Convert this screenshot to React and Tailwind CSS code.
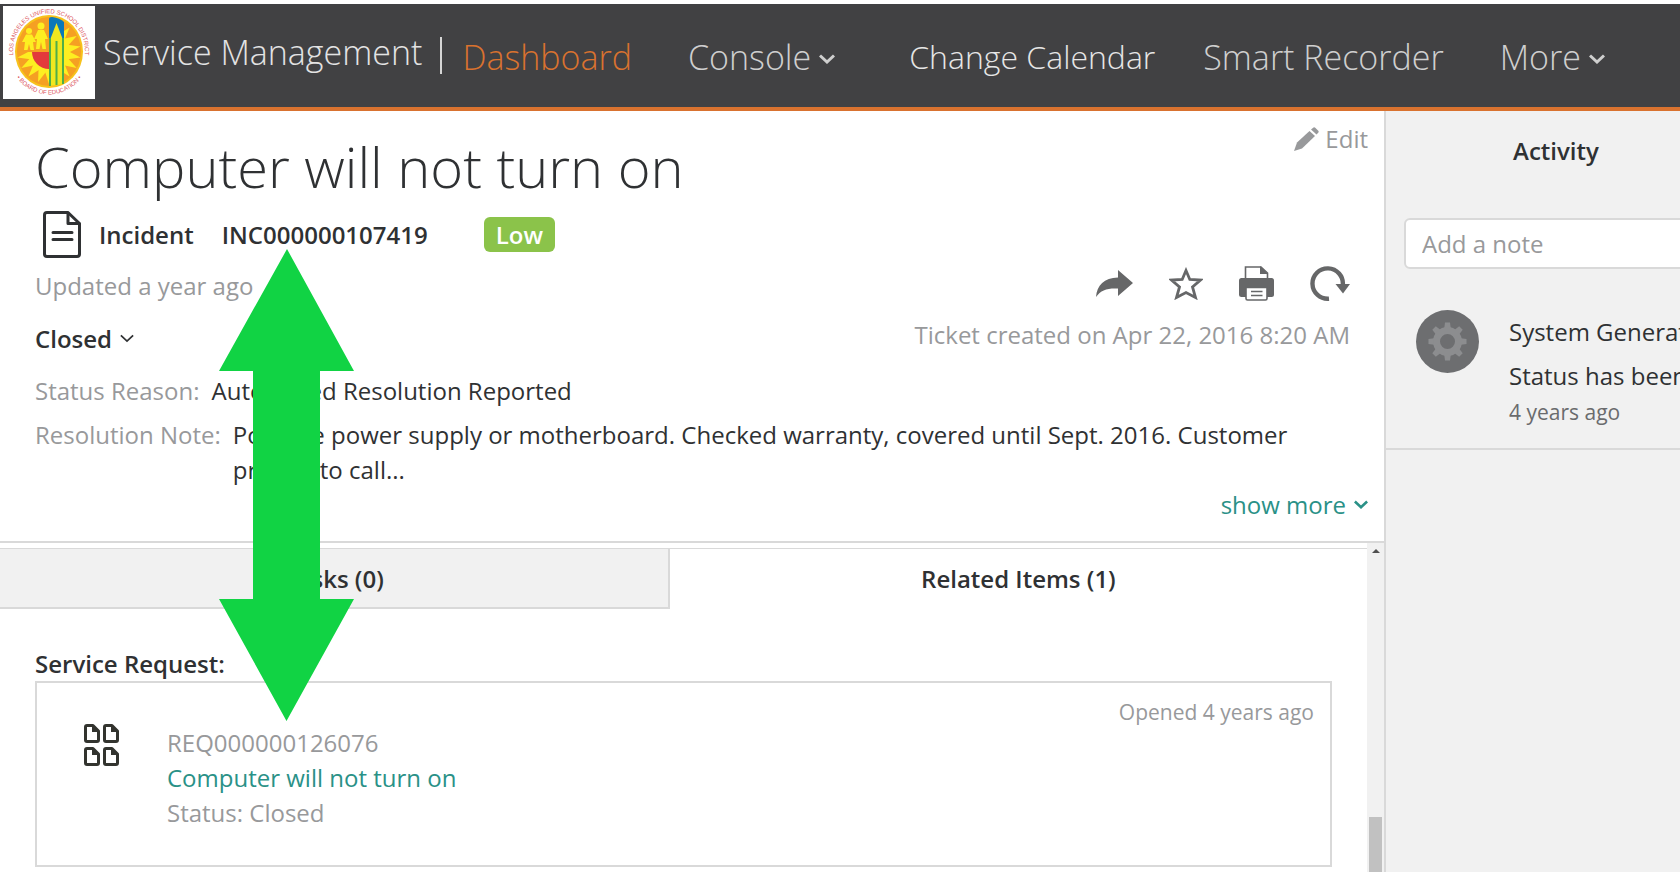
import React, { useState } from "react";

function Logo() {
  const rays = Array.from({ length: 18 }, (_, i) => i * 20);
  return (
    <svg viewBox="0 0 92 93" className="w-[92px] h-[93px] bg-white shrink-0" role="img" aria-label="Los Angeles Unified School District Board of Education">
      <defs>
        <path id="ring-top" d="M 13.4 61.3 A 36 38 0 1 1 78.6 61.3" />
        <path id="ring-bottom" d="M 9.500 64.7 A 41 43.5 0 0 0 82.500 64.7" />
      </defs>
      <ellipse cx="46" cy="45.500" rx="34" ry="36.500" fill="#f7c21c" />
      <ellipse cx="46" cy="45.500" rx="32" ry="34.500" fill="#f5a023" />
      <g fill="#fdee21">
        {rays.map((r) => (
          <path key={r} d="M41.500 28 L46 14 L50.500 28 Z" transform={`rotate(${r} 46 46)`} />
        ))}
        <circle cx="46" cy="46" r="20" />
      </g>
      <path d="M14.500 46 A32 34.5 0 0 1 46 11.500 V46 Z" fill="#f5a023" />
      <path d="M29 46 H46 V63 A17 17 0 0 1 29 46 Z" fill="#e23a3c" />
      <g fill="#fdee21">
        <circle cx="26" cy="25" r="3" />
        <path d="M23 28.500 H29 L33 36 L30 36 L31 44 H27.500 L26 38 L24.500 44 H21 L22 36 L19 36 Z" />
        <circle cx="38" cy="20" r="3.500" />
        <path d="M35 24 H41 L45 33 L42 33 L43 43 H39.500 L38 36 L36.500 43 H33 L34 33 L31 33 Z" />
      </g>
      <path d="M46 13 Q46 11 49 11 Q57 12 61 16 V38 H46 Z" fill="#0b78b8" />
      <path d="M47 34 L53.500 17 L60 34 V78 L47 80 Z" fill="#f0e71f" />
      <path d="M47 32 V80 M53.500 35 V79 M60 32 V78" stroke="#4fae48" strokeWidth="2" fill="none" />
      <g fill="#dc5560" textAnchor="middle" className="font-['Liberation_Sans'] text-[6px]">
        <text><textPath href="#ring-top" startOffset="50%">LOS ANGELES UNIFIED SCHOOL DISTRICT</textPath></text>
        <text><textPath href="#ring-bottom" startOffset="50%">• BOARD OF EDUCATION •</textPath></text>
      </g>
    </svg>
  );
}

function Chevron({ className }) {
  return (
    <svg viewBox="0 0 16 10" className={className} fill="none" stroke="currentColor" aria-hidden="true">
      <path d="M1 1.500 L8 8 L15 1.500" />
    </svg>
  );
}

function DocumentIcon() {
  return (
    <svg viewBox="0 0 38 47" className="w-[38px] h-[47px]" fill="none" stroke="#2f3133" strokeWidth="3" strokeLinejoin="round" strokeLinecap="round" aria-hidden="true">
      <path d="M4 1.500 H25 L36.500 12.500 V43 Q36.500 45.500 34 45.500 H4 Q1.500 45.500 1.500 43 V4 Q1.500 1.500 4 1.500 Z" />
      <path d="M25 2 V12.500 H36" />
      <path d="M10 21.500 H29 M10 28.500 H29" />
    </svg>
  );
}

function RequestIcon() {
  const spots = ["translate(0 0)", "translate(19 0)", "translate(0 23)", "translate(19 23)"];
  return (
    <svg viewBox="0 0 35 42" className="w-[35px] h-[42px]" fill="none" stroke="#33342f" strokeWidth="3" strokeLinejoin="round" aria-hidden="true">
      {spots.map((t) => (
        <g key={t} transform={t}>
          <path d="M3 1.500 H9 L14.500 7 V16 Q14.500 17.500 13 17.500 H3 Q1.500 17.500 1.500 16 V3 Q1.500 1.500 3 1.500 Z" />
          <path d="M8 1 V8 H15 Z" fill="#33342f" stroke="none" />
        </g>
      ))}
    </svg>
  );
}

function GearAvatar() {
  const teeth = [0, 45, 90, 135, 180, 225, 270, 315];
  return (
    <svg viewBox="0 0 63 63" className="w-[63px] h-[63px] shrink-0" aria-hidden="true">
      <circle cx="31.500" cy="31.500" r="31.500" fill="#6d6e70" />
      <g fill="#8c8d8f">
        {teeth.map((t) => (
          <path key={t} d="M28 20 L29 12.500 H34 L35 20 Z" transform={`rotate(${t} 31.5 31.5)`} />
        ))}
      </g>
      <circle cx="31.500" cy="31.500" r="11" fill="none" stroke="#8c8d8f" strokeWidth="7" />
    </svg>
  );
}

function Toolbar() {
  return (
    <div className="flex items-center justify-end gap-9 h-[35px] text-[#666768]">
      <button type="button" aria-label="Share">
        <svg viewBox="0 0 37 27" className="w-[37px] h-[27px]" fill="currentColor">
          <path d="M22 0 L37 13 L22 26 V18.500 C11 18 5 20 0 27 C1 15 8 8 22 7.500 Z" />
        </svg>
      </button>
      <button type="button" aria-label="Favorite">
        <svg viewBox="0 0 34 33" className="w-[34px] h-[33px]" fill="none" stroke="currentColor" strokeWidth="2.800">
          <path d="M17 3.500 L20.800 12.500 L31.500 13 L23.500 20 L26.500 30.500 L17 25.500 L7.500 30.500 L10.500 20 L2.500 13 L13.200 12.500 Z" />
        </svg>
      </button>
      <button type="button" aria-label="Print">
        <svg viewBox="0 0 35 35" className="w-[35px] h-[35px]" fill="currentColor">
          <path d="M6.500 12 V1 H22 L28.500 7 V12" fill="#fff" stroke="currentColor" strokeWidth="1.600" />
          <path d="M21 0 L29 8 H21 Z" />
          <rect x="0" y="12" width="35" height="19" rx="2.500" />
          <path d="M7 21.500 H28 V32.500 Q28 34 26.500 34 H8.500 Q7 34 7 32.500 Z" fill="#fff" stroke="currentColor" strokeWidth="1.600" />
          <path d="M12 25.500 H23.500 M12 29.500 H23.500" stroke="currentColor" strokeWidth="1.600" />
        </svg>
      </button>
      <button type="button" aria-label="Refresh">
        <svg viewBox="0 0 40 35" className="w-[40px] h-[35px]">
          <path d="M19 32.700 A15.200 15.200 0 1 1 32.800 19" fill="none" stroke="currentColor" strokeWidth="4.400" />
          <path d="M25.500 18 H40 L33 27.500 Z" fill="currentColor" />
        </svg>
      </button>
    </div>
  );
}

function Header() {
  return (
    <header className="flex items-start mt-1 pl-[3px] pt-0.5 h-[107px] bg-[#414143] border-b-4 border-[#d9722f] whitespace-nowrap overflow-hidden">
      <Logo />
      <div className="ml-2 mt-[22px] text-[34px] leading-[48px] font-light text-[#e3e3e3]">Service Management</div>
      <div className="ml-[18px] mt-[31px] w-0.5 h-[37px] bg-[#d5d5d5]"></div>
      <nav className="flex mt-[29px] ml-5 text-[34px] leading-[44px] font-light text-[#cfcfcf]">
        <a href="#dashboard" className="text-[#d9722f]">Dashboard</a>
        <a href="#console" className="ml-14 flex items-center gap-2">
          Console
          <Chevron className="w-4 h-2.5 mt-1 stroke-3" />
        </a>
        <a href="#calendar" className="ml-[74px] text-[32px] text-[#e6e6e6]">Change Calendar</a>
        <a href="#recorder" className="ml-12">Smart Recorder</a>
        <a href="#more" className="ml-14 flex items-center gap-2">
          More
          <Chevron className="w-4 h-2.5 mt-1 stroke-3" />
        </a>
      </nav>
    </header>
  );
}

function Ticket() {
  return (
    <section className="relative pl-[35px] pr-4 pt-2.5 pb-[19px] border-b-2 border-[#d9d9d9]">
      <div className="flex justify-between items-start">
        <h1 className="mt-2 text-[56px] leading-[74px] font-light">Computer will not turn on</h1>
        <button type="button" className="flex items-center gap-1.5 text-[#98999b]">
          <svg viewBox="0 0 25 24" className="w-[25px] h-6" fill="currentColor" aria-hidden="true">
            <path d="M0 24 L3 15.500 L15.500 4 L21 9 L8 21.500 Z" />
            <path d="M17 2.500 L19.500 0.500 Q20.500 0 21.500 1 L24.500 4 Q25 5 24.200 5.800 L22.500 7.500 Z" />
          </svg>
          Edit
        </button>
      </div>

      <div className="flex items-center mt-[7px] ml-2 h-12 font-semibold">
        <DocumentIcon />
        <span className="ml-[18px]">Incident</span>
        <span className="ml-7">INC000000107419</span>
        <span className="ml-14 px-3 rounded-md bg-[#8bc34a] text-white">Low</span>
      </div>

      <div className="flex justify-between mt-2 mr-[18px]">
        <div className="pt-0.5">
          <p className="text-[#98999b]">Updated a year ago</p>
          <button type="button" className="flex items-center gap-2 mt-[18px] font-semibold">
            Closed
            <Chevron className="w-3.5 h-[9px] stroke-2" />
          </button>
        </div>
        <div>
          <Toolbar />
          <p className="mt-4 text-[#98999b]">Ticket created on Apr 22, 2016 8:20 AM</p>
        </div>
      </div>

      <dl className="mt-[17px]">
        <div className="flex gap-3">
          <dt className="text-[#98999b]">Status Reason:</dt>
          <dd>Automated Resolution Reported</dd>
        </div>
        <div className="flex gap-3 mt-[9px]">
          <dt className="text-[#98999b] whitespace-nowrap">Resolution Note:</dt>
          <dd className="max-w-[1090px]">
            Possible power supply or motherboard. Checked warranty, covered until Sept. 2016. Customer prefers to call...
          </dd>
        </div>
      </dl>

      <button type="button" className="flex items-center gap-2 ml-auto text-[#2a9187]">
        show more
        <Chevron className="w-3.5 h-[9px] stroke-3" />
      </button>

      {/* double arrow linking the incident number to its request */}
      <svg viewBox="0 0 135 472" className="absolute left-[219px] top-[138px] w-[135px] h-[472px] z-10 pointer-events-none" fill="#11d344" aria-hidden="true">
        <path d="M68 0 L135 122 H101 V350 H135 L67.500 472 L0 350 H34 V122 H0 Z" />
      </svg>
    </section>
  );
}

function RelatedItems() {
  const [tab, setTab] = useState("related");
  const tabClass = (name) =>
    name === tab ? "pb-0.5" : "bg-[#f1f1f1] border-r-2 border-b-2 border-[#d9d9d9]";

  return (
    <section className="flex flex-1">
      <div className="flex-1 mt-[5px] border-t border-[#d9d9d9] pb-1">
        <div className="flex h-[60px] font-semibold" role="tablist">
          <button type="button" role="tab" aria-selected={tab === "tasks"} onClick={() => setTab("tasks")} className={`w-[49%] ${tabClass("tasks")}`}>Tasks (0)</button>
          <button type="button" role="tab" aria-selected={tab === "related"} onClick={() => setTab("related")} className={`w-[51%] ${tabClass("related")}`}>Related Items (1)</button>
        </div>
        <div className="px-[35px] pt-[37px]">
          <h2 className="font-semibold">Service Request:</h2>
          <div className="flex h-[186px] border-2 border-[#d9d9d9] pl-[47px] pr-4">
            <div className="pt-[41px]">
              <RequestIcon />
            </div>
            <div className="ml-12 pt-[42px] text-[#98999b]">
              <p>REQ000000126076</p>
              <a href="#request" className="block text-[#2a9187]">Computer will not turn on</a>
              <p>Status: Closed</p>
            </div>
            <p className="ml-auto pt-[13px] text-[21px] leading-[32px] text-[#98999b]">Opened 4 years ago</p>
          </div>
        </div>
      </div>
      <div className="flex flex-col w-[17px] bg-[#f1f1f1] items-center" aria-hidden="true">
        <svg viewBox="0 0 8 4" className="w-2 h-1 mt-1.5" fill="#505050">
          <path d="M0 4 L4 0 L8 4 Z" />
        </svg>
        <div className="mt-auto w-[13px] h-[55px] bg-[#c1c1c1]"></div>
      </div>
    </section>
  );
}

function Activity() {
  const [note, setNote] = useState("");
  return (
    <aside className="w-[294px] shrink-0 overflow-hidden bg-[#f1f1f1]">
      <div className="w-[340px]">
        <h2 className="pt-[22px] text-center font-semibold">Activity</h2>
        <div className="px-[18px] pt-[50px]">
          <input type="text" aria-label="Add a note" placeholder="Add a note" value={note} onChange={(e) => setNote(e.target.value)} className="w-full h-[51px] px-4 rounded-md border-2 border-[#d9d9d9] bg-white placeholder:text-[#98999b]" />
        </div>
        <div className="flex gap-[30px] mt-[41px] pl-[30px] pb-[17px] border-b-2 border-[#d9d9d9] whitespace-nowrap">
          <GearAvatar />
          <div className="pt-1">
            <p>System Generated</p>
            <p className="mt-[9px]">Status has been</p>
            <p className="text-[21px] leading-[38px] text-[#6a6b6d]">4 years ago</p>
          </div>
        </div>
      </div>
    </aside>
  );
}

export default function App() {
  return (
    <div className="flex flex-col min-h-screen bg-white font-['Open_Sans',sans-serif] text-[24px] leading-[35px] text-[#2f3133]">
      <Header />
      <div className="flex flex-1">
        <main className="flex flex-col flex-1 border-r-2 border-[#d9d9d9]">
          <Ticket />
          <RelatedItems />
        </main>
        <Activity />
      </div>
    </div>
  );
}
